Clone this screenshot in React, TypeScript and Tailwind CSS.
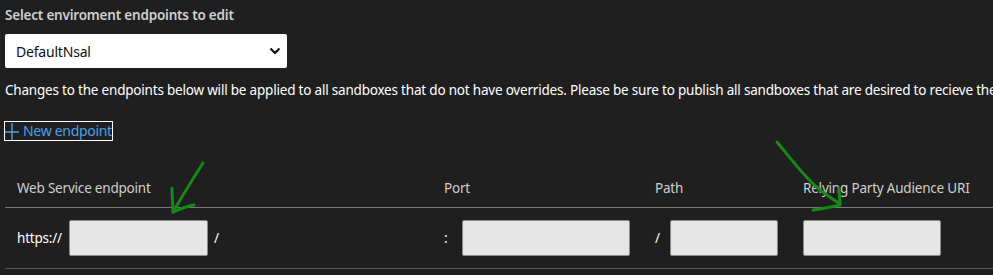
import React from "react";

const font = { fontFamily: '"Noto Sans", "Open Sans", sans-serif' };

function Field({ w }: { w: string }) {
  return (
    <input
      type="text"
      className={`h-[36px] ${w} bg-[#e6e6e6] border border-[#8a8a8a] rounded-[2px] outline-none`}
    />
  );
}

export default function App() {
  return (
    <div
      className="relative w-full h-[275px] bg-[#1f1f1f] overflow-hidden pl-[5px] text-[13.5px] tracking-[-0.2px]"
      style={font}
    >
      <h4 className="pt-[5px] h-[25px] leading-[20px] font-semibold text-[#cfcfcf]">
        Select enviroment endpoints to edit
      </h4>

      <div className="mt-[9px] w-[282px] h-[34px] bg-white rounded-[2px] flex items-center justify-between pl-[11px] pr-[6px]">
        <span className="text-[#111] text-[14px]">DefaultNsal</span>
        <svg width="12" height="8" viewBox="0 0 12 8" fill="none">
          <path d="M1.5 1.5 L6 6 L10.5 1.5" stroke="#111" strokeWidth="2.2" />
        </svg>
      </div>

      <p className="mt-[12px] leading-[20px] text-white whitespace-nowrap">
        Changes to the endpoints below will be applied to all sandboxes that do not have overrides. Please be sure to publish all sandboxes that are desired to recieve the changes.
      </p>

      <button className="mt-[22px] h-[18px] flex items-center gap-[4px] outline outline-1 outline-white text-[#4ba0e6] leading-none">
        <svg width="14" height="17" viewBox="0 0 14 17" fill="none">
          <path d="M7 0 V17 M0 9 H14" stroke="#4ba0e6" strokeWidth="1.4" />
        </svg>
        <span className="text-[14px] tracking-[-0.3px] -mt-[1px]">New endpoint</span>
      </button>

      <div className="mt-[38px]">
        <div className="grid grid-cols-[439px_211px_148px_1fr] border-b border-[#7a7a7a] pb-[9px] leading-[20px] text-[#cfcfcf]">
          <div className="pl-[12px]">Web Service endpoint</div>
          <div>Port</div>
          <div>Path</div>
          <div>Relying Party Audience URI</div>
        </div>
        <div className="grid grid-cols-[439px_211px_148px_1fr] border-b border-[#5a5a5a] h-[61px] items-center text-white">
          <div className="pl-[12px] flex items-center">
            <span className="w-[52px]">https://</span>
            <Field w="w-[139px]" />
            <span className="ml-[6px]">/</span>
          </div>
          <div className="flex items-center">
            <span className="w-[18px]">:</span>
            <Field w="w-[168px]" />
          </div>
          <div className="flex items-center">
            <span className="w-[15px]">/</span>
            <Field w="w-[108px]" />
          </div>
          <div className="flex items-center">
            <Field w="w-[138px]" />
          </div>
        </div>
      </div>

      <svg
        className="absolute inset-0 pointer-events-none"
        width="993"
        height="275"
        viewBox="0 0 993 275"
        fill="none"
      >
        <g stroke="#148a14" strokeWidth="3" strokeLinecap="round" strokeLinejoin="round">
          <path d="M203 163 C194 177 183 195 173 212" />
          <path d="M172 188 C172 197 173 205 173 212 C180 209 187 206 194 205" />
          <path d="M777 142 C792 160 805 178 820 190 C828 196 834 200 840 204" />
          <path d="M839 188 C839 194 840 199 840 205 C831 207 822 209 813 210" />
        </g>
      </svg>
    </div>
  );
}
